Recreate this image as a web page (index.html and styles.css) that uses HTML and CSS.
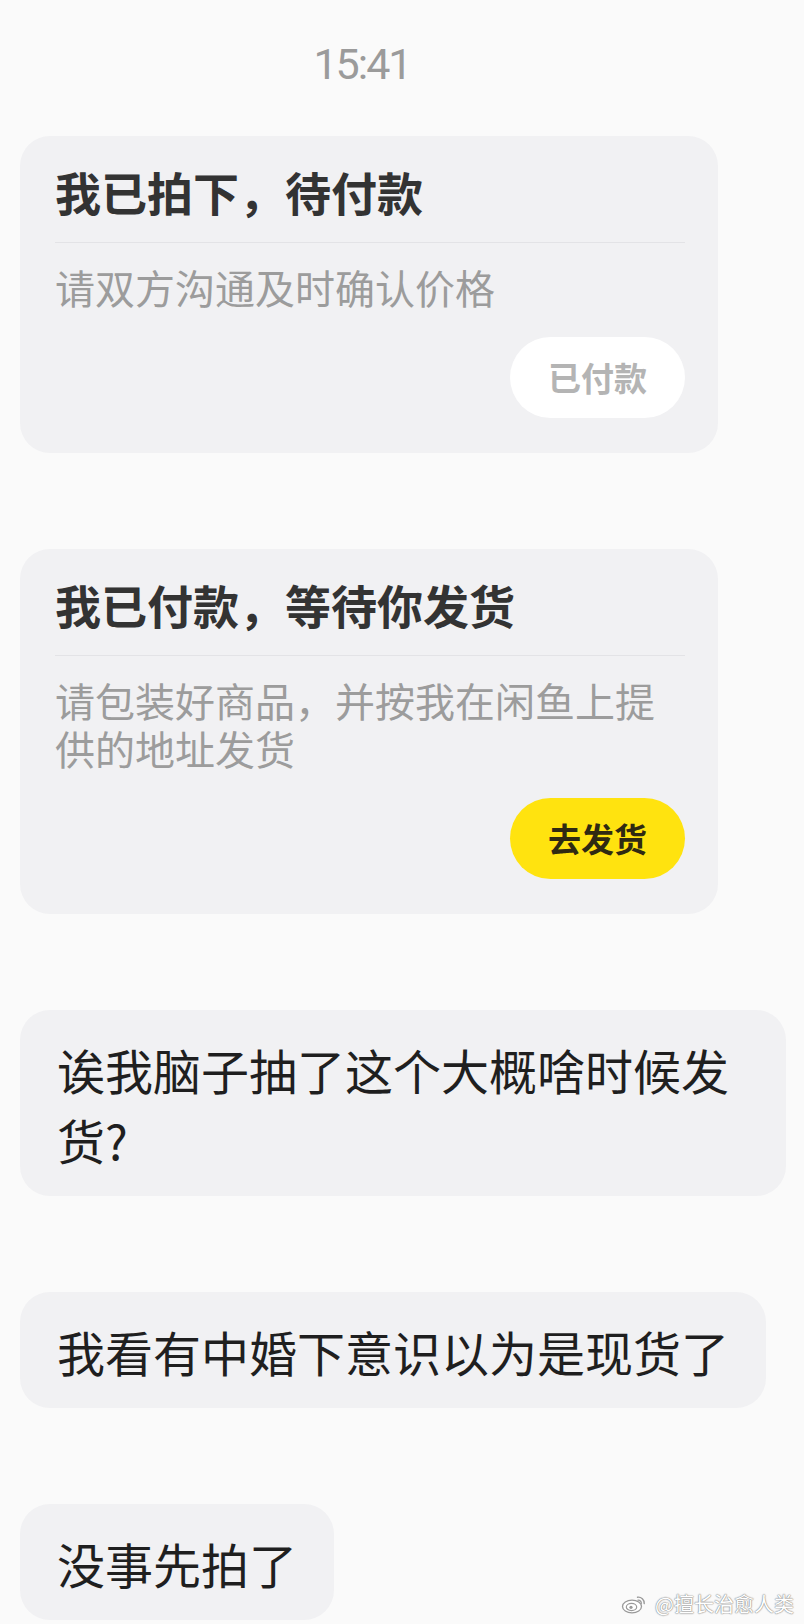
FILE: index.html
```html
<!DOCTYPE html>
<html lang="zh-CN">
<head>
<meta charset="utf-8">
<title>聊天</title>
<link rel="stylesheet" href="styles.css">
</head>
<body>
<div class="page">
  <div class="time-row"><span class="time">15:41</span></div>
  <div class="thread">
    <div class="card">
      <div class="card-title">我已拍下，待付款</div>
      <div class="divider"></div>
      <div class="card-sub">请双方沟通及时确认价格</div>
      <div class="card-actions"><span class="btn btn-done">已付款</span></div>
    </div>
    <div class="card">
      <div class="card-title">我已付款，等待你发货</div>
      <div class="divider"></div>
      <div class="card-sub">请包装好商品，并按我在闲鱼上提供的地址发货</div>
      <div class="card-actions"><span class="btn btn-ship">去发货</span></div>
    </div>
    <div class="bubble">诶我脑子抽了这个大概啥时候发货?</div>
    <div class="bubble">我看有中婚下意识以为是现货了</div>
    <div class="bubble">没事先拍了</div>
  </div>
  <div class="watermark">
    <svg class="wb-logo" viewBox="0 0 26 20" width="26" height="20" aria-hidden="true">
      <ellipse cx="11" cy="12.5" rx="9.5" ry="6.3" fill="#fff" stroke="#9a9a9a" stroke-width="1.3"/>
      <ellipse cx="10.5" cy="13" rx="5.2" ry="3.6" fill="#fff" stroke="#9a9a9a" stroke-width="1.2"/>
      <circle cx="10" cy="13.3" r="1.6" fill="#9a9a9a"/>
      <path d="M16.5 3.2 A6 6 0 0 1 23.2 9.6" fill="none" stroke="#9a9a9a" stroke-width="1.4" stroke-linecap="round"/>
      <path d="M17 6.2 A3 3 0 0 1 20.3 9.4" fill="none" stroke="#9a9a9a" stroke-width="1.3" stroke-linecap="round"/>
    </svg>
    <span class="wb-text">@擅长治愈人类</span>
  </div>
</div>
</body>
</html>
```

FILE: styles.css
```css
html, body {
  margin: 0;
  padding: 0;
  background: #fafafa;
}

.page {
  position: relative;
  width: 804px;
  height: 1624px;
  overflow: hidden;
  font-family: "Noto Sans CJK SC", "Noto Sans", sans-serif;
}

.time-row {
  padding: 39px 80px 0 0;
  text-align: center;
  height: 50px;
}

.time {
  font-family: Roboto, "Liberation Sans", sans-serif;
  font-size: 43px;
  line-height: 50px;
  color: #9b9b9b;
  letter-spacing: -2px;
}

.thread {
  display: flex;
  flex-direction: column;
  align-items: flex-start;
  gap: 96px;
  padding: 47px 0 0 20px;
}

.card {
  box-sizing: border-box;
  width: 698px;
  background: #f1f1f3;
  border-radius: 30px;
  padding: 26px 33px 35px 35px;
  display: flex;
  flex-direction: column;
}

.card-title {
  font-size: 46px;
  line-height: 58px;
  font-weight: 700;
  color: #333333;
}

.divider {
  height: 1px;
  background: #e3e3e6;
  margin: 22px 0 20px;
}

.card-sub {
  font-size: 40px;
  line-height: 48px;
  color: #9c9c9c;
}

.card-actions {
  display: flex;
  justify-content: flex-end;
  margin-top: 26px;
}

.btn {
  box-sizing: border-box;
  height: 81px;
  padding: 0 38px;
  border-radius: 41px;
  font-size: 33px;
  font-weight: 700;
  line-height: 81px;
}

.btn-done {
  background: #ffffff;
  color: #b4b4b4;
}

.btn-ship {
  background: #ffe30f;
  color: #2f2a12;
}

.bubble {
  box-sizing: border-box;
  max-width: 766px;
  background: #f1f1f3;
  border-radius: 30px;
  padding: 24px 37px 22px 37px;
  font-size: 48px;
  line-height: 70px;
  color: #1f1f1f;
}

.watermark {
  position: absolute;
  right: 10px;
  bottom: 8px;
  display: flex;
  align-items: center;
  gap: 8px;
}

.wb-logo {
  display: block;
}

.wb-text {
  font-size: 20px;
  line-height: 24px;
  color: #ffffff;
  text-shadow: 0 0 1px #8a8a8a, 0 0 1px #8a8a8a, 0 0 2px #b0b0b0;
}
```
